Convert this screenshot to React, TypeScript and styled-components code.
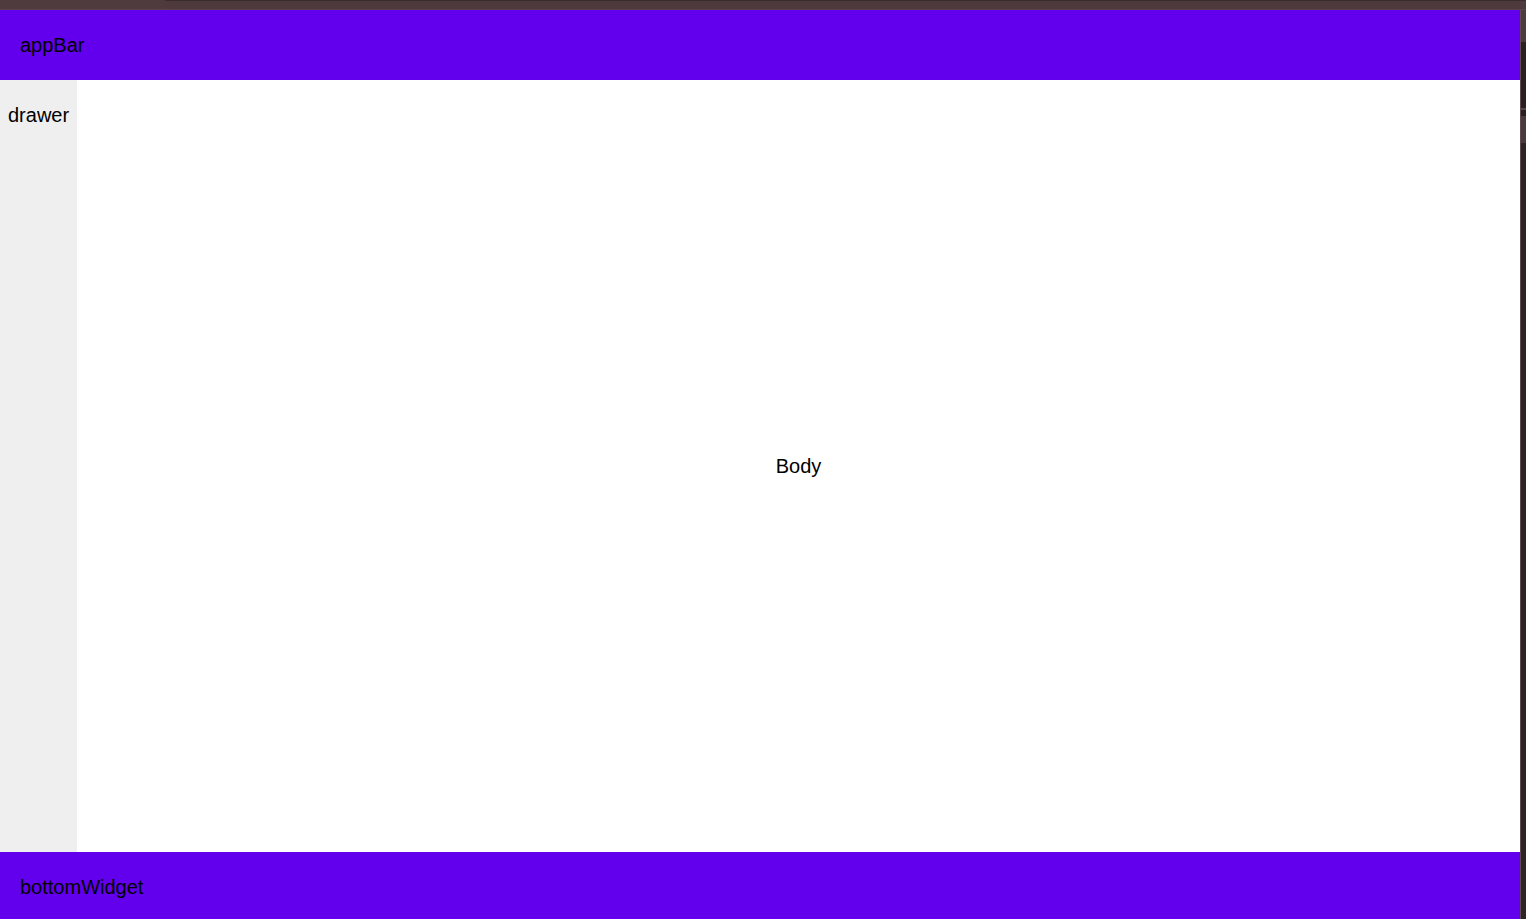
import React from "react";
import styled, { createGlobalStyle } from "styled-components";

const GlobalStyle = createGlobalStyle`
  html, body {
    margin: 0;
    padding: 0;
    height: 100%;
    overflow: hidden;
    background: #2d2224;
  }
  #root {
    height: 100%;
  }
  * {
    box-sizing: border-box;
  }
`;

const Window = styled.div`
  height: 919px;
  display: flex;
  flex-direction: column;
  font-family: "Liberation Sans", Arial, sans-serif;
  font-size: 20px;
  line-height: 23px;
  color: #000;
  overflow: hidden;
`;

const TitleStrip = styled.div`
  flex: 0 0 10px;
  display: flex;
  background: #4e3a3d;
`;

const TitleTab = styled.div`
  flex: 0 0 165px;
  background: #4f3b3e;
  border-bottom: 1px solid #5a4649;
`;

const TitleRest = styled.div`
  flex: 1;
  border-top: 1px solid #3a2b2e;
  border-bottom: 1px solid #5a4649;
`;

const MainRow = styled.div`
  flex: 1;
  min-height: 0;
  display: flex;
`;

const Scaffold = styled.div`
  flex: 1;
  display: flex;
  flex-direction: column;
  overflow: hidden;
`;

const Bar = styled.div`
  flex: 0 0 70px;
  display: flex;
  align-items: center;
  padding-left: 20px;
  background: #6200ee;
`;

const Middle = styled.div`
  flex: 0 0 772px;
  display: flex;
`;

const Drawer = styled.div`
  flex: 0 0 76px;
  background: #efefef;
  padding: 24px 8px 0 8px;
  white-space: nowrap;
`;

const Body = styled.div`
  flex: 1;
  background: #ffffff;
  display: flex;
  align-items: center;
  justify-content: center;
`;

const ScrollStrip = styled.div`
  flex: 0 0 6px;
  display: flex;
  flex-direction: column;
  border-left: 1px solid #5e4b4e;
  background: #2e2426;
`;

const StripSegment = styled.div<{ $h: number; $c: string }>`
  flex: 0 0 ${(p) => p.$h}px;
  background: ${(p) => p.$c};
`;

const segments = [
  { h: 32, c: "#4e3a3d" },
  { h: 66, c: "#2a2022" },
  { h: 2, c: "#5a4649" },
  { h: 6, c: "#2a2022" },
  { h: 27, c: "#4a3a3c" },
];

export default function App() {
  return (
    <>
      <GlobalStyle />
      <Window>
        <TitleStrip>
          <TitleTab />
          <TitleRest />
        </TitleStrip>
        <MainRow>
          <Scaffold>
            <Bar>appBar</Bar>
            <Middle>
              <Drawer>drawer</Drawer>
              <Body>Body</Body>
            </Middle>
            <Bar>bottomWidget</Bar>
          </Scaffold>
          <ScrollStrip>
            {segments.map((s, i) => (
              <StripSegment key={i} $h={s.h} $c={s.c} />
            ))}
          </ScrollStrip>
        </MainRow>
      </Window>
    </>
  );
}
